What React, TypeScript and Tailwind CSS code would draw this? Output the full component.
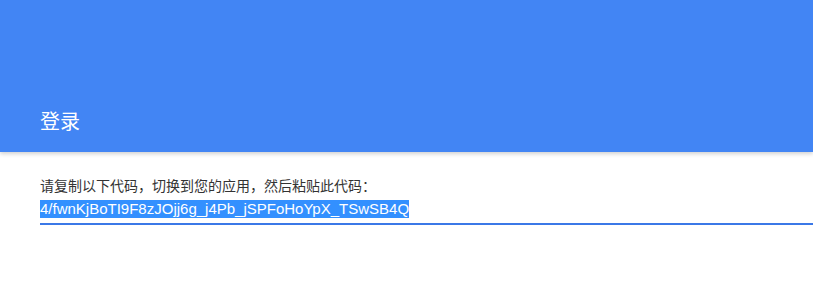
import React from 'react';

const font = { fontFamily: '"Liberation Sans", Arial, "Noto Sans CJK SC", sans-serif' };

export default function App() {
  const code = '4/fwnKjBoTI9F8zJOjj6g_j4Pb_jSPFoHoYpX_TSwSB4Q';
  return (
    <div className="w-[813px] h-[281px] bg-white overflow-hidden" style={font}>
      <header className="relative z-10 h-[152px] bg-[#4285f4] flex items-end pl-10 pb-4 shadow-[0_2px_4px_rgba(0,0,0,0.18)]">
        <h1 className="text-[20px] leading-[28px] text-white font-normal">登录</h1>
      </header>
      <main className="pl-10 pt-[24px]">
        <p className="text-[14px] leading-5 text-[#333]">请复制以下代码，切换到您的应用，然后粘贴此代码：</p>
        <div className="flex pt-1 pb-[5px] border-b-2 border-[#3b78e7]">
          <span className="text-[15px] leading-[18px] bg-[#3390ff] text-white">{code}</span>
        </div>
      </main>
    </div>
  );
}
